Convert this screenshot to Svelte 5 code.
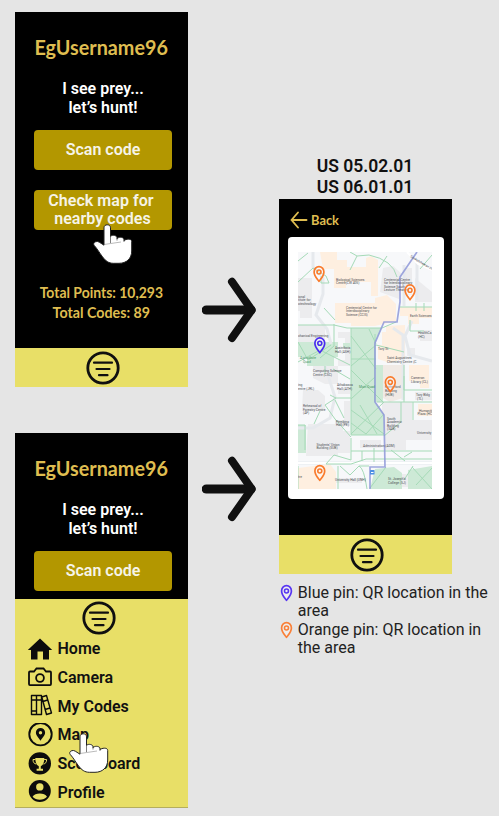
<script>
  const menu = [
    { label: 'Home', icon: 'home' },
    { label: 'Camera', icon: 'camera' },
    { label: 'My Codes', icon: 'books' },
    { label: 'Map', icon: 'map' },
    { label: 'Scoreboard', icon: 'trophy' },
    { label: 'Profile', icon: 'profile' }
  ];
  const mapPins = [
    { x: 319, y: 273, color: '#f97b2c' },
    { x: 410, y: 291.3, color: '#f97b2c' },
    { x: 390.3, y: 383.3, color: '#f97b2c' },
    { x: 319.8, y: 472, color: '#f97b2c' },
    { x: 319.8, y: 344.3, color: '#4a2cf0' }
  ];
  const labels = [
    [336, 280.5, 'Biological Sciences'], [336, 284, 'Centre(CW 405)'],
    [384, 280.5, 'Centennial Centre'], [384, 284, 'for Interdisciplinary'], [384, 287.5, 'Science South'], [384, 291, 'Lecture Theatres'],
    [346, 308.5, 'Centennial Centre for'], [346, 312, 'Interdisciplinary'], [346, 315.5, 'Science (CCIS)'],
    [298, 297.5, 'ional'], [298, 301, 'titute for'], [298, 304.5, 'otechnology'],
    [298, 337, 'chanical Engineering'], [335, 349, 'Assiniboia'], [335, 352.5, 'Hall (ASH)'],
    [410, 317, 'Earth Sciences'], [418, 334, 'HealthCa'], [418, 337.5, '(HC)'], [378, 350, 'Tory St'],
    [387, 359, 'Saint Augustines'], [387, 362.5, 'Chemistry Centre (C'],
    [313, 372, 'Computing Science'], [313, 375.5, 'Centre (CSC)'], [337, 386, 'Athabasca'], [337, 389.5, 'Hall (ATH)'],
    [298, 385.5, 'ing'], [298, 389.5, 'entre (JRL)'], [303, 407, 'Rehearsal of'], [303, 410.5, 'Forestry Centre'], [303, 414, '(AF)'],
    [336, 422.5, 'Pembina'], [336, 426, 'Hall (PE)'], [316.5, 445.5, 'Students’ Union'], [316.5, 449, 'Building (SUB)'],
    [387, 419.5, 'South'], [387, 423, 'Academic'], [387, 426.5, 'Building'], [387, 430, '(SAB)'],
    [385, 388, 'Rutherford'], [385, 392, 'Building'], [385, 396, '(HUB)'],
    [411, 379, 'Cameron'], [411, 382.5, 'Library (CL)'], [416, 396, 'Tory Bldg'], [417, 399.5, '(TL)'],
    [419, 411.5, 'Humaniti'], [417.5, 415, 'Plaza (HC'], [417, 433.5, 'University'],
    [363, 446.5, 'Administration (ADM)'], [335, 481, 'University Hall (UNH)'], [388, 480, 'St. Joseph’s'], [388, 483.5, 'College (SJ)'],
    [298, 477.5, 'tre']
  ];
</script>

{#snippet filterIcon()}
  <svg class="filter" width="34" height="34" viewBox="0 0 34 34" fill="none" stroke="#101010" stroke-linecap="round">
    <circle cx="17" cy="17" r="15.2" stroke-width="2.8" />
    <path d="M8 11.7h18M10.5 18h13M13 24.2h8.500" stroke-width="2.2" />
  </svg>
{/snippet}

{#snippet pinShape(color)}
  <path d="M0 8.400C-1.700 5.800-4.900 3-4.900-1.100A4.900 5.300 0 0 1 4.900-1.100C4.900 3 1.700 5.800 0 8.400Z" fill="#fff" fill-opacity=".35" stroke={color} stroke-width="1.700" stroke-linejoin="round" />
  <circle cx="0" cy="-1" r="2" fill="none" stroke={color} stroke-width="1.600" />
{/snippet}

{#snippet arrow()}
  <svg class="arrow" width="55" height="66" viewBox="0 0 55 66" fill="none" stroke="#101010" stroke-width="8" stroke-linecap="round" stroke-linejoin="round">
    <path d="M4.300 33H49" stroke-width="9.200" />
    <path d="M30 4.800L49.700 33L30 61" />
  </svg>
{/snippet}

{#snippet hand()}
  <svg width="41" height="41" viewBox="0 0 41 41">
    <path d="M11 20V3.800C11 1.800 12.400.800 14.200.800S17.500 1.800 17.500 3.800V12.500C18.500 11 22.500 10.700 24 13.200V14.700C25.500 12.900 29.500 12.700 31 15V16.700C32.500 15 38.700 14.100 38.700 17.500V27C38.700 34.500 33.500 39.300 26 39.300H20.500C15.500 39.300 12.500 36.800 9.500 32.800C6.500 28.900 4.500 25 1.200 21.400C-.700 18.800 3.300 16.200 6.300 18.200L11 21.200Z" fill="#fff" stroke="#222" stroke-width="1" />
    <path d="M17.500 12.500V19M24 13.500V16.500M31 15.500V18" fill="none" stroke="#444" stroke-width=".700" />
    <path d="M11 20.500L28 18" fill="none" stroke="#777" stroke-width=".500" />
  </svg>
{/snippet}

{#snippet intro()}
  <h1><span>EgUsername96</span></h1>
  <p class="tagline">I see prey...<br />let’s hunt!</p>
  <button>Scan code</button>
{/snippet}

<main>
  <div class="left">
    <section class="phone first">
      <div class="screen">
        {@render intro()}
        <button class="second">Check map for<br /><span>nearby codes</span></button>
        <div class="totals"><span class="points">Total Points: 10,293</span><span class="codes">Total Codes: 89</span></div>
      </div>
      <footer>{@render filterIcon()}</footer>
      <div class="cursor check">{@render hand()}</div>
    </section>

    <section class="phone opened">
      <div class="screen short">{@render intro()}</div>
      <div class="drawer">
        <div class="drawer-top">{@render filterIcon()}</div>
        <nav>
          {#each menu as item}
            <div class="item">
              <svg width="28" height="26" viewBox="0 0 28 26">
                {#if item.icon === 'home'}
                  <path d="M14 2.500L26.200 14H23V23.500H17V15.500H11.500V23.500H5V14H1.800Z" fill="#0c0c0c" />
                {:else if item.icon === 'camera'}
                  <path d="M4 6.500H8L10.500 3.500H17.500L20 6.500H24Q25 6.500 25 7.500V19Q25 20.200 24 20.200H4Q3 20.200 3 19V7.500Q3 6.500 4 6.500Z" fill="none" stroke="#0c0c0c" stroke-width="1.800" />
                  <circle cx="14" cy="13" r="3.900" fill="none" stroke="#0c0c0c" stroke-width="1.800" />
                {:else if item.icon === 'books'}
                  <path d="M5.500 1.500H10.500V20.500H5.500ZM10.500 1.500H15.500V20.500H10.500ZM15.800 3L20.500 1.500L25.500 19L20.500 20.500ZM5.500 6H15.500M17 7.500L21.500 6M19 15.500L24 14M5.500 17H10.500" fill="none" stroke="#0c0c0c" stroke-width="1.400" stroke-linejoin="round" />
                {:else if item.icon === 'map'}
                  <circle cx="14.500" cy="11.200" r="11.200" fill="none" stroke="#0c0c0c" stroke-width="1.900" />
                  <path d="M14.500 17.700C13 15.200 9.900 12.700 9.900 9.500A4.600 4.600 0 0 1 19.100 9.500C19.100 12.700 16 15.200 14.500 17.700Z" fill="#0c0c0c" />
                  <circle cx="14.500" cy="9.700" r="1.700" fill="#e8df67" />
                {:else if item.icon === 'trophy'}
                  <circle cx="13.800" cy="11.400" r="11.200" fill="#0c0c0c" />
                  <path d="M9.300 6H18.300C18.300 10.500 17 13.200 14.800 14.200V16.700H17V18.800H10.600V16.700H12.800V14.200C10.600 13.200 9.300 10.500 9.300 6Z" fill="#e8df67" />
                  <path d="M9.500 7.500H7C7 10.500 8.200 11.700 10.200 12M18.100 7.500H20.600C20.600 10.500 19.400 11.700 17.400 12" fill="none" stroke="#e8df67" stroke-width="1" />
                {:else}
                  <circle cx="13.800" cy="11" r="11" fill="#0c0c0c" />
                  <circle cx="13.800" cy="6.900" r="3.700" fill="#e8df67" />
                  <path d="M6.600 16.700C9 12.300 18.600 12.300 21 16.700C17.800 20.700 9.800 20.700 6.600 16.700Z" fill="#e8df67" />
                {/if}
              </svg>
              <span>{item.label}</span>
            </div>
          {/each}
        </nav>
      </div>
      <div class="cursor menu-hand">{@render hand()}</div>
    </section>
  </div>

  <div class="arrows">{@render arrow()}{@render arrow()}</div>

  <div class="right">
    <h2>US 05.02.01<br />US 06.01.01</h2>
    <section class="phone map-phone">
      <div class="screen">
        <div class="back">
          <svg width="18" height="18" viewBox="0 0 18 18" fill="none" stroke="#dfbd50" stroke-width="1.900" stroke-linecap="round" stroke-linejoin="round"><path d="M16.500 9H1.500M8 1.500L1.500 9L8 16.500" /></svg>
          <span>Back</span>
        </div>
        <div class="card">
          <svg width="134" height="237" viewBox="298 252 134 237">
            <rect x="298" y="252" width="134" height="237" fill="#f7f8fa" />
            <g fill="#ececee">
              <path d="M298 278H312V318H300V311H298ZM298 325H325V342H298ZM383 268L393 266L402 274L399 299L380 292ZM338 332H350V366H338V360H345V338H338Z" />
              <path d="M313 366H338V384H325L313 378ZM303 390H318L325 396V411H302ZM344 401H350V426H335V420H344ZM308 424H343V431H350V453H338V456H306ZM360 440H381V448H360Z" />
              <path d="M382 402H412V420H432V440H406V450H385V430H382ZM404 268H412V295H404ZM415 278L432 292V302H415ZM407 348H415V356H407ZM415 392H432V400H415ZM381 474H409V487H381ZM420 330H432V341H420Z" />
              <path d="M338 389H350V394H338ZM333 478H362V483H333Z" />
            </g>
            <g fill="#feefe0">
              <path d="M320 252H337V260H347V267H366V258L371 256L378 260V296H371V282H346V288H334V269H323Z" />
              <path d="M335 303H375V298L387 295L396 304V321L375 326H351V323H335ZM386 326L405 325V358L390 363L378 359V345H382V332H386ZM400 307H432V318H419V324H408V316H400ZM409 365H429V388H420V381H409ZM418 404H432V416H418ZM298 468L330 464L336 472V489H298Z" />
            </g>
            <path d="M383 365H403V398L390 402L383 398Z" fill="#f0eae5" />
            <g fill="#cde9d6">
              <path d="M351 328H382L375 343V402L384 414V435H351ZM298 342H338V357H334V366H307V357H298ZM343 343H350V348H343ZM376 365H383V402H376ZM298 425H306V453H298Z" />
              <path d="M375 469L394 467L402 473V489H370ZM408 470L432 466V489H408Z" />
            </g>
            <g fill="none" stroke="#e6e9ed" stroke-width="3">
              <path d="M313 252V267L323 278V294L316 315L327 329L331 344M325 366L335 397L330 418L313 428H298M298 463H432M393 328L403 335V400M404 265V306M417 263V300M412 321L405 336L410 355L432 361" />
            </g>
            <path d="M407 252L418 264L432 270M298 463H432" fill="none" stroke="#fff" stroke-width="2" />
            <g fill="none" stroke="#a5dab7" stroke-width="1">
              <path d="M298 261L308 253M298 282L313 268L326 276L329 283H321V276M350 252L357 256L350 270M357 256L369 255Q393 260 397 277M387 256L379 268M432 255L420 269M324 308L335 320M334 324V346L320 358M298 325H334L347 328H382L396 322M400 307H432M416 303V311M424 303V311" />
              <path d="M351 328V435M351 336L376 369M351 359H376M351 366L376 345M351 370L383 402M351 399L375 377M351 434L384 402M351 410L384 434M351 423L366 434L384 414M360 405L377 434M351 435H384M369 329L376 344M375 334V402" />
              <path d="M298 342L308 360L331 345M298 362L320 350L350 365M325 366V374M333 369L350 379M330 395L336 398H351M336 398L325 405L335 419L351 437M335 400L344 418M320 411L314 424M377 402H432M404 365V402M404 376V390H432M401 402V422L384 436M413 402V420M376 345L404 352M410 320V331H424" />
              <path d="M351 438V460L334 455L326 464H351L366 459H432M351 451H432M362 451V461M374 448V462M391 450L405 461M404 457L412 452M340 466L350 475L359 466H369M359 466Q364 468 367 489M386 467L370 488M412 467L432 489M416 485L432 468M298 489V466M413 466L404 480M338 466V489M298 425H305V450" />
            </g>
            <path d="M417 252L400 277V302L397 322H384L375 343V402L384 415L385 467H370V489" fill="none" stroke="#8e98d8" stroke-opacity=".85" stroke-width="1.700" />
            <rect x="370" y="470" width="4.500" height="4.500" rx=".600" fill="#4d8de4" />
            <path d="M371 472.500H373.500" stroke="#fff" />
            <g font-family="Roboto, sans-serif" font-size="3.300" fill="#4b4d52">
              {#each labels as [x, y, text]}
                <text {x} {y}>{text}</text>
              {/each}
              <text x="359" y="388" fill="#3c9360">Main Quad</text>
              <text x="300" y="359" fill="#3c9360">Agriculture</text>
              <text x="303" y="363" fill="#3c9360">Quad</text>
              <text transform="translate(410 257) rotate(31)">Saskatchewan Dr</text>
            </g>
            {#each mapPins as pin}
              <g transform={`translate(${pin.x} ${pin.y})`}>{@render pinShape(pin.color)}</g>
            {/each}
          </svg>
        </div>
      </div>
      <footer>{@render filterIcon()}</footer>
    </section>
    <div class="legend">
      <div><svg width="13" height="18" viewBox="-6.500 -8 13 18">{@render pinShape('#5836f2')}</svg><p>Blue pin: QR location in the area</p></div>
      <div><svg width="13" height="18" viewBox="-6.500 -8 13 18">{@render pinShape('#f98038')}</svg><p>Orange pin: QR location in the area</p></div>
    </div>
  </div>
</main>

<style>
  :global(body) { margin: 0; background: #e5e5e5; }
  main { width: 499px; height: 816px; overflow: hidden; display: flex; background: #e5e5e5; color: #111; font: 16px/18.600px Roboto, sans-serif; box-sizing: border-box; }
  svg { display: block; flex: none; }
  h1, h2, p { margin: 0; }
  .left { width: 188px; padding: 12px 0 0 15px; box-sizing: border-box; display: flex; flex-direction: column; gap: 46px; flex: none; }
  .phone { position: relative; width: 173px; display: flex; flex-direction: column; flex: none; }
  .first { height: 375px; }
  .opened { height: 375px; }
  .screen { flex: 1; background: #000; display: flex; flex-direction: column; align-items: center; min-height: 0; box-sizing: border-box; }
  h1 { margin-top: 22px; height: 26px; font: 700 20.500px/26px Lato, sans-serif; color: #dfbd50; white-space: nowrap; }
  h1 span { display: inline-block; transform: scaleX(.965); }
  .tagline { margin: 20px 0 12.500px 3px; color: #fff; font-weight: 600; text-align: center; line-height: 18.600px; white-space: nowrap; }
  button { width: 138px; height: 40.500px; margin: 0 0 0 3px; padding: 0; border: 0; border-radius: 4px; background: #b39700; color: #f6f4e8; font: 600 16px/18.600px Roboto, sans-serif; flex: none; }
  .second { margin-top: 19.500px; padding: 1px 4px 0 0; letter-spacing: .050px; }
  .second span { padding-left: 3px; }
  .totals { margin-top: 51.500px; display: flex; flex-direction: column; align-items: center; color: #dfbd50; font: 700 15px/20.500px Lato, sans-serif; white-space: nowrap; }
  .points { transform: scaleX(.93); }
  .codes { transform: scaleX(.95); }
  footer { height: 39px; background: #e8df67; display: flex; align-items: center; justify-content: center; flex: none; padding-left: 3px; box-sizing: border-box; }
  .short { flex: none; height: 166px; }
  .drawer { flex: 1; min-height: 0; background: #e8df67; border-bottom: 1px solid #b5ae5e; box-sizing: border-box; }
  .drawer-top { height: 36px; display: flex; align-items: center; justify-content: center; padding: 2px 5px 0 0; box-sizing: border-box; }
  nav { display: flex; flex-direction: column; margin-left: 10.500px; }
  .item { height: 28.800px; display: flex; align-items: center; gap: 4px; font-weight: 600; color: #111; }
  .cursor { position: absolute; }
  .check { left: 78px; top: 212px; }
  .menu-hand { left: 54px; top: 300px; }
  .arrows { margin-left: 14px; padding-top: 277px; display: flex; flex-direction: column; gap: 112.500px; width: 55px; flex: none; }
  .right { margin-left: 21.500px; padding-top: 156px; flex: 1; min-width: 0; }
  h2 { width: 173px; height: 43px; text-align: center; font: 600 17.500px/20.500px Roboto, sans-serif; color: #111; }
  .map-phone { height: 375px; }
  .back { align-self: stretch; height: 38px; padding: 3px 0 0 11px; box-sizing: border-box; display: flex; align-items: center; gap: 3px; color: #dfbd50; font: 700 14px/20px Lato, sans-serif; }
  .back span { transform: scaleX(.92); transform-origin: left; }
  .card { width: 156.500px; height: 262px; border-radius: 4px; background: #fff; display: flex; justify-content: center; align-items: center; padding: 5px 1px 0 0; box-sizing: border-box; margin-left: 1.500px; }
  .legend { padding: 9.500px 0 0 1.300px; }
  .legend > div { display: flex; gap: 5px; align-items: flex-start; }
  .legend p { width: 199px; font-size: 16px; line-height: 18.600px; color: #222; }
</style>
